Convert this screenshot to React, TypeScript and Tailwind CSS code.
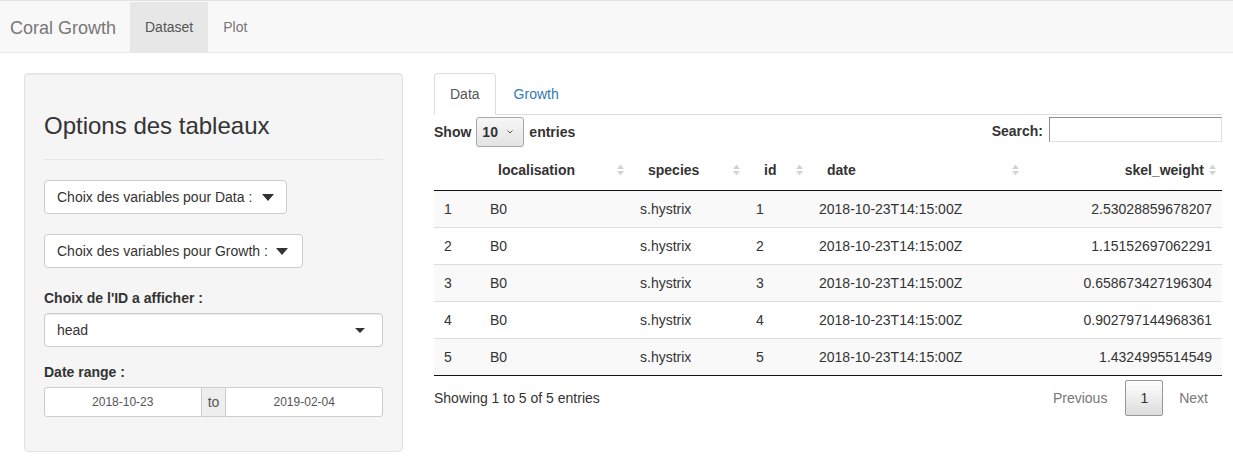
import type { ReactNode } from 'react';

const rows = [
  { n: 1, loc: 'B0', sp: 's.hystrix', id: 1, date: '2018-10-23T14:15:00Z', w: '2.53028859678207' },
  { n: 2, loc: 'B0', sp: 's.hystrix', id: 2, date: '2018-10-23T14:15:00Z', w: '1.15152697062291' },
  { n: 3, loc: 'B0', sp: 's.hystrix', id: 3, date: '2018-10-23T14:15:00Z', w: '0.658673427196304' },
  { n: 4, loc: 'B0', sp: 's.hystrix', id: 4, date: '2018-10-23T14:15:00Z', w: '0.902797144968361' },
  { n: 5, loc: 'B0', sp: 's.hystrix', id: 5, date: '2018-10-23T14:15:00Z', w: '1.4324995514549' },
];

const Caret = () => (
  <svg width="12" height="7" viewBox="0 0 12 7">
    <polygon points="0,0 12,0 6,7" fill="#333" />
  </svg>
);

const SortIcon = () => (
  <svg width="7" height="12" viewBox="0 0 7 12" className="shrink-0">
    <polygon points="0,5 3.5,0.5 7,5" fill="#d3d3d3" />
    <polygon points="0,7 3.5,11.5 7,7" fill="#d3d3d3" />
  </svg>
);

const Th = ({ children, right }: { children?: ReactNode; right?: boolean }) => (
  <th className="border-b border-[#111] py-[10px] pl-[18px] pr-[6px] text-left font-bold">
    {children !== undefined && (
      <div className={right ? 'flex items-center justify-end gap-[5px]' : 'flex items-center justify-between'}>
        <span>{children}</span>
        <SortIcon />
      </div>
    )}
  </th>
);

export default function App() {
  return (
    <div className="min-h-screen bg-white text-[14px] leading-[20px] text-[#333] font-['Liberation_Sans',Arial,sans-serif]">
      {/* navbar */}
      <nav className="flex h-[53px] border-t border-b border-t-[#dfe3e7] border-b-[#e7e7e7] bg-[#f8f8f8] pt-px">
        <div className="w-[130px] pl-[10px] pt-px text-[18px] leading-[50px] text-[#777]">Coral Growth</div>
        <div className="bg-[#e7e7e7] px-[15px] pt-px leading-[49px] text-[#555]">Dataset</div>
        <div className="px-[15px] pt-px leading-[49px] text-[#777]">Plot</div>
      </nav>

      <div className="flex pl-[24px] pt-[20px]">
        {/* sidebar */}
        <div className="w-[379px] rounded-[4px] border border-[#e3e3e3] bg-[#f5f5f5] px-[19px] pt-[19px] pb-[19px] shadow-[inset_0_1px_1px_rgba(0,0,0,0.05)]">
          <h3 className="mt-[20px] text-[24px] leading-[26.4px] text-[#333]">Options des tableaux</h3>
          <hr className="mt-[20px] mb-[20px] border-t border-[#e6e6e6]" />

          <div className="flex h-[34px] w-[243px] items-center justify-between rounded-[4px] border border-[#ccc] bg-white pl-[12px] pr-[12px]">
            <span>Choix des variables pour Data :</span>
            <Caret />
          </div>
          <div className="mt-[20px] flex h-[34px] w-[259px] items-center justify-between rounded-[4px] border border-[#ccc] bg-white pl-[12px] pr-[14px]">
            <span>Choix des variables pour Growth :</span>
            <Caret />
          </div>

          <div className="mt-[20px] mb-[5px] font-bold">Choix de l'ID a afficher :</div>
          <div className="flex h-[34px] items-center justify-between rounded-[4px] border border-[#ccc] bg-white pl-[12px] pr-[17px] shadow-[inset_0_1px_1px_rgba(0,0,0,0.075)]">
            <span>head</span>
            <svg width="10" height="5" viewBox="0 0 10 5">
              <polygon points="0,0 10,0 5,5" fill="#333" />
            </svg>
          </div>

          <div className="mt-[15px] mb-[5px] font-bold">Date range :</div>
          <div className="mb-[15px] flex h-[30px] text-[12px] text-[#555]">
            <div className="flex w-[158px] items-center justify-center rounded-l-[3px] border border-[#ccc] bg-white">2018-10-23</div>
            <div className="flex w-[24px] items-center justify-center border-y border-[#ccc] bg-[#eee] text-[14px]">to</div>
            <div className="flex w-[158px] items-center justify-center rounded-r-[3px] border border-[#ccc] bg-white">2019-02-04</div>
          </div>
        </div>

        {/* main panel */}
        <div className="ml-[31px] w-[788px]">
          <ul className="flex border-b border-[#ddd]">
            <li className="mr-[2px] -mb-px rounded-t-[4px] border border-[#ddd] border-b-white bg-white px-[15px] py-[10px] text-[#555]">Data</li>
            <li className="-mb-px border border-transparent px-[15px] py-[10px] text-[#337ab7]">Growth</li>
          </ul>

          <div className="mt-[2px] flex items-start justify-between">
            <div className="flex items-center font-bold">
              <span>Show</span>
              <div className="mx-[5px] flex h-[30px] w-[48px] items-center justify-between rounded-[3px] border border-[#a9a9a9] bg-gradient-to-b from-[#f7f7f7] to-[#e3e3e3] pl-[5px] pr-[10px]">
                <span>10</span>
                <svg width="6" height="4" viewBox="0 0 6 4">
                  <polyline points="0.5,0.5 3,3 5.5,0.5" fill="none" stroke="#555" strokeWidth="1" />
                </svg>
              </div>
              <span>entries</span>
            </div>
            <div className="flex items-center pt-[3px] font-bold">
              <span>Search:</span>
              <div className="ml-[6px] h-[25px] w-[173px] -mt-[3px] border border-t-[#8f8f8f] border-l-[#8f8f8f] border-r-[#e0e0e0] border-b-[#e0e0e0] bg-white" />
            </div>
          </div>

          <table className="mt-[3px] w-[788px] table-fixed border-separate border-spacing-0">
            <colgroup>
              <col className="w-[46px]" />
              <col className="w-[150px]" />
              <col className="w-[116px]" />
              <col className="w-[63px]" />
              <col className="w-[216px]" />
              <col className="w-[197px]" />
            </colgroup>
            <thead>
              <tr>
                <Th />
                <Th>localisation</Th>
                <Th>species</Th>
                <Th>id</Th>
                <Th>date</Th>
                <Th right>skel_weight</Th>
              </tr>
            </thead>
            <tbody>
              {rows.map((r, i) => {
                const bg = i % 2 === 0 ? 'bg-[#f9f9f9]' : 'bg-white';
                const top = i > 0 ? 'border-t border-[#ddd]' : '';
                const bottom = i === rows.length - 1 ? 'border-b border-b-[#111]' : '';
                const cell = `${top} ${bottom} px-[10px] py-[8px]`;
                return (
                  <tr key={r.n} className={bg}>
                    <td className={cell}>{r.n}</td>
                    <td className={cell}>{r.loc}</td>
                    <td className={cell}>{r.sp}</td>
                    <td className={cell}>{r.id}</td>
                    <td className={cell}>{r.date}</td>
                    <td className={`${cell} text-right`}>{r.w}</td>
                  </tr>
                );
              })}
            </tbody>
          </table>

          <div className="flex items-start justify-between">
            <div className="pt-[12px]">Showing 1 to 5 of 5 entries</div>
            <div className="mt-[4px] flex items-center">
              <span className="mr-[4px] px-[14px] py-[8px] text-[#777]">Previous</span>
              <span className="rounded-[2px] border border-[#979797] bg-gradient-to-b from-white to-[#dcdcdc] px-[14px] py-[7px]">1</span>
              <span className="ml-[2px] px-[14px] py-[8px] text-[#777]">Next</span>
            </div>
          </div>
        </div>
      </div>
    </div>
  );
}
